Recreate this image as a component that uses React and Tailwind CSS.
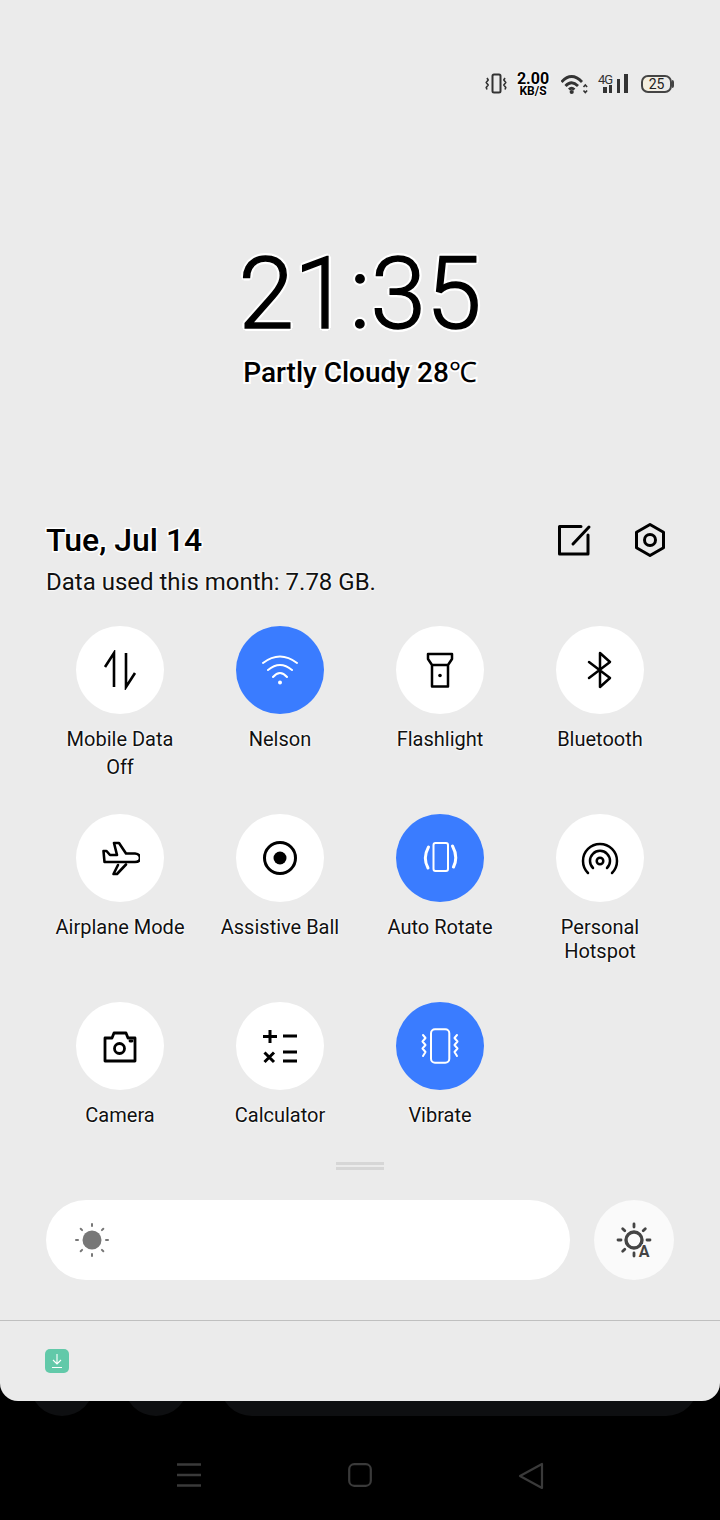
const halo = '[text-shadow:0_0_2px_#fff,0_0_2px_#fff,0_0_3px_#fff]';

function Ico({ children, className = 'text-black', sw = 2.5 }) {
  return (
    <svg width="40" height="40" viewBox="0 0 40 40" fill="none" stroke="currentColor" strokeWidth={sw} strokeLinecap="round" strokeLinejoin="round" className={className}>
      {children}
    </svg>
  );
}

const tiles = [
  {
    label: ['Mobile Data', 'Off'],
    tall: true,
    icon: <Ico sw={2.6}><path d="M14 37V3L5 17M26 3v34l9-14" strokeLinecap="butt" strokeLinejoin="miter" /></Ico>,
  },
  {
    label: ['Nelson'],
    on: true,
    icon: (
      <Ico sw={2} className="text-white">
        <path d="M3 13Q20 0 37 13M8 20Q20 10 32 20M13 27Q20 19 27 27" />
        <circle cx="20" cy="32.5" r="2" fill="currentColor" stroke="none" />
      </Ico>
    ),
  },
  {
    label: ['Flashlight'],
    icon: (
      <Ico>
        <path d="M8 4H32V9L28 15H12L8 9ZM12 15V36.5H28V15" />
        <circle cx="20" cy="25.5" r="1.8" fill="currentColor" stroke="none" />
      </Ico>
    ),
  },
  {
    label: ['Bluetooth'],
    icon: <Ico><path d="M9 12L30 28L20 37V3L30 12L9 28" /></Ico>,
  },
  {
    label: ['Airplane Mode'],
    icon: (
      <Ico sw={2.6}>
        <path d="M3.5 13H6.5L10 17H17L14 5H19L26 15.5H35Q40 16 40 20Q40 24 35 24H4.5Z" />
        <path d="M18 27L13.5 36H17L26 26.5" />
      </Ico>
    ),
  },
  {
    label: ['Assistive Ball'],
    icon: (
      <Ico sw={3}>
        <circle cx="20" cy="20" r="15.5" />
        <circle cx="20" cy="20" r="6.5" fill="currentColor" stroke="none" />
      </Ico>
    ),
  },
  {
    label: ['Auto Rotate'],
    on: true,
    icon: (
      <Ico sw={2} className="text-white">
        <rect x="13.5" y="5" width="14.5" height="28" rx="2" />
        <path d="M8.5 9Q2.5 20 8 30" strokeWidth="3" />
        <path d="M32.5 8Q38.5 19 33.5 29" strokeWidth="3" />
      </Ico>
    ),
  },
  {
    label: ['Personal', 'Hotspot'],
    icon: (
      <Ico>
        <path d="M8 35A17 17 0 1 1 32 35M13 30A10 10 0 1 1 27 30" />
        <circle cx="20" cy="23" r="3.3" />
      </Ico>
    ),
  },
  {
    label: ['Camera'],
    icon: (
      <Ico sw={2.8}>
        <path d="M5 12H12L14 7H26L28 12H35V35H5Z" />
        <circle cx="19.5" cy="22.5" r="5" />
        <path d="M30 15H32" />
      </Ico>
    ),
  },
  {
    label: ['Calculator'],
    icon: (
      <Ico sw={3}>
        <path d="M3 10.5H17M10 4V17M23 10H37M4.5 26.5L14 36M14 26.5L4.5 36M23 26H37M23 35H37" strokeLinecap="butt" />
      </Ico>
    ),
  },
  {
    label: ['Vibrate'],
    on: true,
    icon: (
      <Ico sw={2} className="text-white">
        <rect x="11" y="3.3" width="18.3" height="33.4" rx="4" />
        <path d="M3 9L5.5 12L2.5 15.5L5.5 19L2.5 22.5L5.5 26L3 30M37 9L34.5 12L37.5 15.5L34.5 19L37.5 22.5L34.5 26L37 30" />
      </Ico>
    ),
  },
];

function Tile({ tile }) {
  return (
    <div className="flex flex-col items-center">
      <div className={`w-[88px] h-[88px] rounded-full flex items-center justify-center ${tile.on ? 'bg-[#3a7cff]' : 'bg-white'}`}>
        {tile.icon}
      </div>
      <div className={`text-center text-[20px] text-[#111] ${tile.tall ? 'mt-[11px] leading-[28px]' : 'mt-[13px] leading-[24px]'} ${halo}`}>
        {tile.label.map((l) => (
          <div key={l}>{l}</div>
        ))}
      </div>
    </div>
  );
}

function Rays({ r1, r2 }) {
  const rays = [0, 45, 90, 135, 180, 225, 270, 315];
  return rays.map((a) => {
    const c = Math.cos((a * Math.PI) / 180);
    const s = Math.sin((a * Math.PI) / 180);
    return <line key={a} x1={20 + c * r1} y1={20 + s * r1} x2={20 + c * r2} y2={20 + s * r2} />;
  });
}

function StatusBar() {
  return (
    <div className="h-[110px] pt-[73px] pr-[46px] flex justify-end items-start text-[#333]">
      <svg width="22" height="21" viewBox="0 0 22 21" fill="none" stroke="currentColor" strokeWidth="2" strokeLinejoin="round" className="mr-[8px]">
        <rect x="7.5" y="1.5" width="8" height="18" rx="1.5" />
        <path d="M2 5L3.2 7L1.2 9.5L3.2 12L1.2 14.5L2 16.5M20 5L18.8 7L20.8 9.5L18.8 12L20.8 14.5L20 16.5" strokeWidth="1.6" />
      </svg>
      <div className={`w-[36px] mr-[10px] flex flex-col items-center font-bold text-black ${halo}`}>
        <span className="text-[16px] leading-[12px]">2.00</span>
        <span className="text-[12px] leading-[11px] mt-[1px]">KB/S</span>
      </div>
      <svg width="28" height="22" viewBox="0 0 28 22" fill="none" stroke="currentColor" strokeWidth="2.8" className="mr-[9px]">
        <path d="M0.5 9Q10.5 -2 21 9M4.5 13Q10.5 6.5 17 13M8 16.5Q10.5 14 13.5 16.5" />
        <circle cx="10.7" cy="19" r="2.1" fill="currentColor" stroke="none" />
        <path d="M22.5 14L24.3 12L26.1 14M22.5 17.5L24.3 19.5L26.1 17.5" strokeWidth="1.6" />
      </svg>
      <div className="relative w-[30px] h-[20px] mr-[13px]">
        <span className="absolute left-0 top-[1px] text-[13px] leading-[11px] tracking-[-1px] text-[#333]">4G</span>
        <div className="absolute left-[5px] bottom-0 flex items-end">
          <div className="w-[4px] h-[6px] bg-[#333]" />
          <div className="w-[3px] h-[8px] bg-[#333] ml-[2px]" />
          <div className="w-[3px] h-[14px] bg-[#333] ml-[5px]" />
          <div className="w-[4px] h-[19px] bg-[#333] ml-[4px]" />
        </div>
      </div>
      <div className="flex items-center mt-[2px]">
        <div className="w-[31px] h-[18px] rounded-[7px] border-2 border-[#444] bg-gradient-to-r from-[#f5efdd] to-[#ebebeb] flex items-center justify-center text-[14px] leading-none text-[#222]">
          25
        </div>
        <div className="w-[2px] h-[8px] bg-[#444] rounded-r-sm" />
      </div>
    </div>
  );
}

export default function App() {
  return (
    <div className="w-[720px] h-[1520px] bg-black overflow-hidden flex flex-col font-['Roboto',sans-serif]">
      <div className="h-[1320px] bg-[#ebebeb] flex flex-col">
        <StatusBar />

        {/* clock */}
        <div className="h-[412px] flex flex-col items-center">
          <div className="mt-[126px] text-[100px] leading-[116px] font-light text-black [-webkit-text-stroke:1.5px_#000] [text-shadow:3px_0_#fff,-3px_0_#fff,0_3px_#fff,0_-3px_#fff,2px_2px_#fff,-2px_2px_#fff,2px_-2px_#fff,-2px_-2px_#fff]">
            21:35
          </div>
          <div className="mt-[3px] text-[28px] leading-[36px] font-medium text-black [paint-order:stroke_fill] [-webkit-text-stroke:4px_#fff]">
            Partly Cloudy 28℃
          </div>
        </div>

        {/* date row */}
        <div className="h-[104px] pl-[46px] pr-[50px] flex items-start justify-between">
          <div>
            <div className="mt-[-1px] text-[32px] leading-[38px] font-medium text-black [paint-order:stroke_fill] [-webkit-text-stroke:3px_#fff]">
              Tue, Jul 14
            </div>
            <div className={`mt-[9px] text-[24px] leading-[28px] text-[#111] ${halo}`}>
              Data used this month: 7.78 GB.
            </div>
          </div>
          <div className="flex gap-[36px] text-[#111] -mt-[2px]">
            <Ico sw={3}><path d="M27 6.5H5.5V34H34V15M19 24L35 7" /></Ico>
            <Ico sw={3}>
              <path d="M20 4.5L33.5 12.2V27.8L20 35.5L6.5 27.8V12.2Z" />
              <circle cx="20" cy="20" r="5.5" />
            </Ico>
          </div>
        </div>

        {/* quick settings */}
        <div className="px-[40px] grid grid-cols-4 auto-rows-[188px] h-[536px]">
          {tiles.map((t) => (
            <Tile key={t.label[0]} tile={t} />
          ))}
        </div>

        {/* handle */}
        <div className="h-[38px] flex flex-col items-center">
          <div className="w-[48px] h-[3px] bg-[#d6d6d6]" />
          <div className="w-[48px] h-[3px] bg-[#d6d6d6] mt-[2px]" />
        </div>

        {/* brightness */}
        <div className="pl-[46px] pr-[46px] flex items-center gap-[24px]">
          <div className="w-[524px] h-[80px] rounded-full bg-white pl-[26px] flex items-center">
            <Ico sw={2} className="text-[#777]">
              <Rays r1={14} r2={16} />
              <circle cx="20" cy="20" r="9.5" fill="currentColor" stroke="none" />
            </Ico>
          </div>
          <div className="w-[80px] h-[80px] rounded-full bg-[#fafafa] flex items-center justify-center">
            <Ico sw={2.8} className="text-[#444]">
              <Rays r1={13} r2={16} />
              <circle cx="20" cy="20" r="8" strokeWidth="3.4" />
              <text x="30" y="37" textAnchor="middle" fontSize="16" fontWeight="700" fill="currentColor" stroke="#fafafa" strokeWidth="2" paintOrder="stroke">A</text>
            </Ico>
          </div>
        </div>
      </div>

      {/* notification card */}
      <div className="relative z-10 h-[81px] bg-[#ebebeb] border-t border-[#bfbfbf] rounded-b-[18px] pl-[45px] flex items-center">
        <div className="w-[24px] h-[24px] rounded-[5px] bg-[#62c9a9] flex items-center justify-center">
          <svg width="14" height="16" viewBox="0 0 14 16" fill="none" stroke="#fff" strokeWidth="1.1">
            <path d="M7 1V11M3 7L7 11L11 7M2 14.5H12" />
          </svg>
        </div>
      </div>

      {/* dock behind the panel */}
      <div className="h-[15px] flex items-end pl-[30px]">
        <div className="w-[64px] h-[64px] shrink-0 rounded-full bg-[#0e0f11]" />
        <div className="w-[64px] h-[64px] shrink-0 rounded-full bg-[#0e0f11] ml-[30px]" />
        <div className="w-[478px] h-[64px] shrink-0 rounded-[32px] bg-[#0e0f11] ml-[32px]" />
      </div>

      {/* nav bar */}
      <div className="flex-1 flex items-start justify-center pt-[47px] gap-[146px] text-[#3a3a3a]">
        <svg width="26" height="24" viewBox="0 0 26 24" fill="none" stroke="currentColor" strokeWidth="2.5">
          <path d="M1 1.5H25M1 12H25M1 22.5H25" />
        </svg>
        <svg width="24" height="24" viewBox="0 0 24 24" fill="none" stroke="currentColor" strokeWidth="2.2">
          <rect x="1.2" y="1.2" width="21.6" height="21.6" rx="5" />
        </svg>
        <svg width="26" height="28" viewBox="0 0 26 28" fill="none" stroke="currentColor" strokeWidth="2.2" strokeLinejoin="round" className="-mt-[1px]">
          <path d="M24 2V26L2 14Z" />
        </svg>
      </div>
    </div>
  );
}
